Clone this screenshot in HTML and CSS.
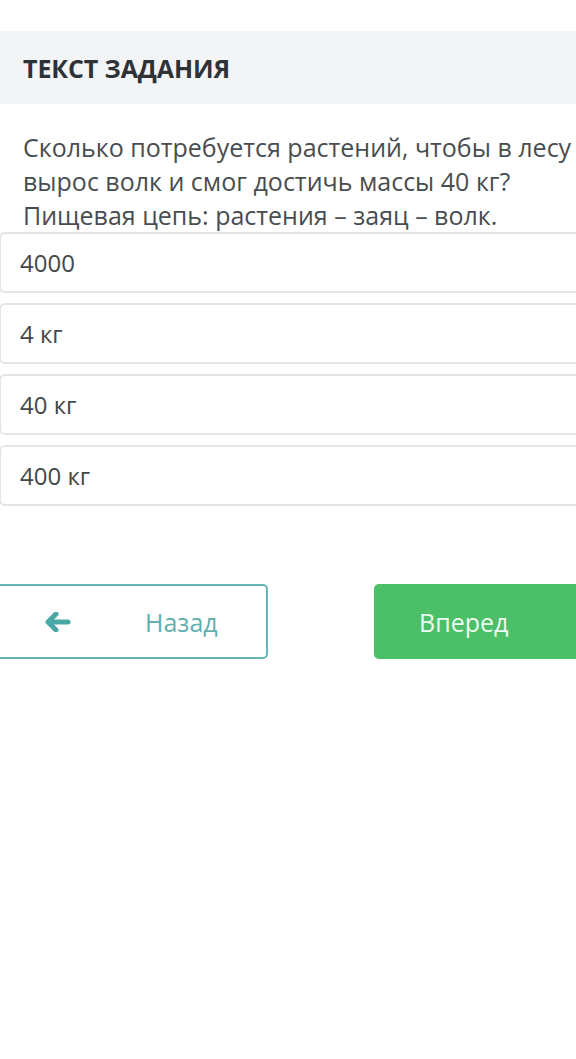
FILE: index.html
```html
<!DOCTYPE html>
<html lang="ru">
<head>
    <meta charset="UTF-8">
    <meta name="viewport" content="width=device-width, initial-scale=1.0">
    <title>Текст задания</title>
    <link rel="stylesheet" href="styles.css">
</head>
<body>
    <div class="quiz">
        <header class="task-header">
            <h1>ТЕКСТ ЗАДАНИЯ</h1>
        </header>

        <p class="question">Сколько потребуется растений, чтобы в лесу вырос волк и смог достичь массы 40 кг? Пищевая цепь: растения – заяц – волк.</p>

        <div class="answers">
            <div class="answer">4000</div>
            <div class="answer">4 кг</div>
            <div class="answer">40 кг</div>
            <div class="answer">400 кг</div>
        </div>

        <div class="nav">
            <button class="btn btn-back">
                <svg class="arrow" width="26" height="20" viewBox="0 0 26 20">
                    <path d="M11 2 L3 10 L11 18 M4 10 H23" fill="none" stroke="currentColor" stroke-width="5" stroke-linecap="round" stroke-linejoin="round"/>
                </svg>
                <span>Назад</span>
            </button>
            <button class="btn btn-next">Вперед</button>
        </div>
    </div>
</body>
</html>
```

FILE: styles.css
```css
html, body {
    margin: 0;
    padding: 0;
    background-color: #fff;
    overflow: hidden;
}
body {
    font-family: "Open Sans", "Noto Sans", sans-serif;
    color: #454849;
}
.quiz {
    width: 660px;
    padding-top: 31px;
}
.task-header {
    background-color: #f2f4f6;
    height: 73px;
    display: flex;
    align-items: center;
    padding: 0 23px;
}
h1 {
    margin: 0;
    font-size: 25px;
    font-weight: 700;
    color: #2e3236;
    letter-spacing: -0.1px;
}
.question {
    margin: 0;
    padding: 26px 23px 0 23px;
    width: 570px;
    font-size: 25px;
    line-height: 34px;
    color: #4a4d4f;
}
.answers {
    display: flex;
    flex-direction: column;
    gap: 10px;
    margin-left: -1px;
}
.answer {
    height: 61px;
    box-sizing: border-box;
    border: 2px solid #e3e5e7;
    border-radius: 6px;
    display: flex;
    align-items: center;
    padding-left: 19px;
    font-size: 24px;
    color: #45484a;
}
.nav {
    display: flex;
    gap: 106px;
    margin-top: 78px;
    margin-left: -5px;
}
.btn {
    flex-shrink: 0;
    width: 273px;
    height: 75px;
    box-sizing: border-box;
    border-radius: 5px;
    font-family: "Open Sans", "Noto Sans", sans-serif;
    font-size: 25px;
    cursor: pointer;
    display: flex;
    align-items: center;
}
.btn-back {
    background-color: #fff;
    border: 2px solid #66b4b3;
    color: #5fb0ae;
    padding-left: 48px;
}
.btn-back .arrow {
    color: #49a8a5;
    margin-right: 74px;
}
.btn-next {
    background-color: #4cbf69;
    border: none;
    color: #eefaf0;
    padding-left: 45px;
}
```
